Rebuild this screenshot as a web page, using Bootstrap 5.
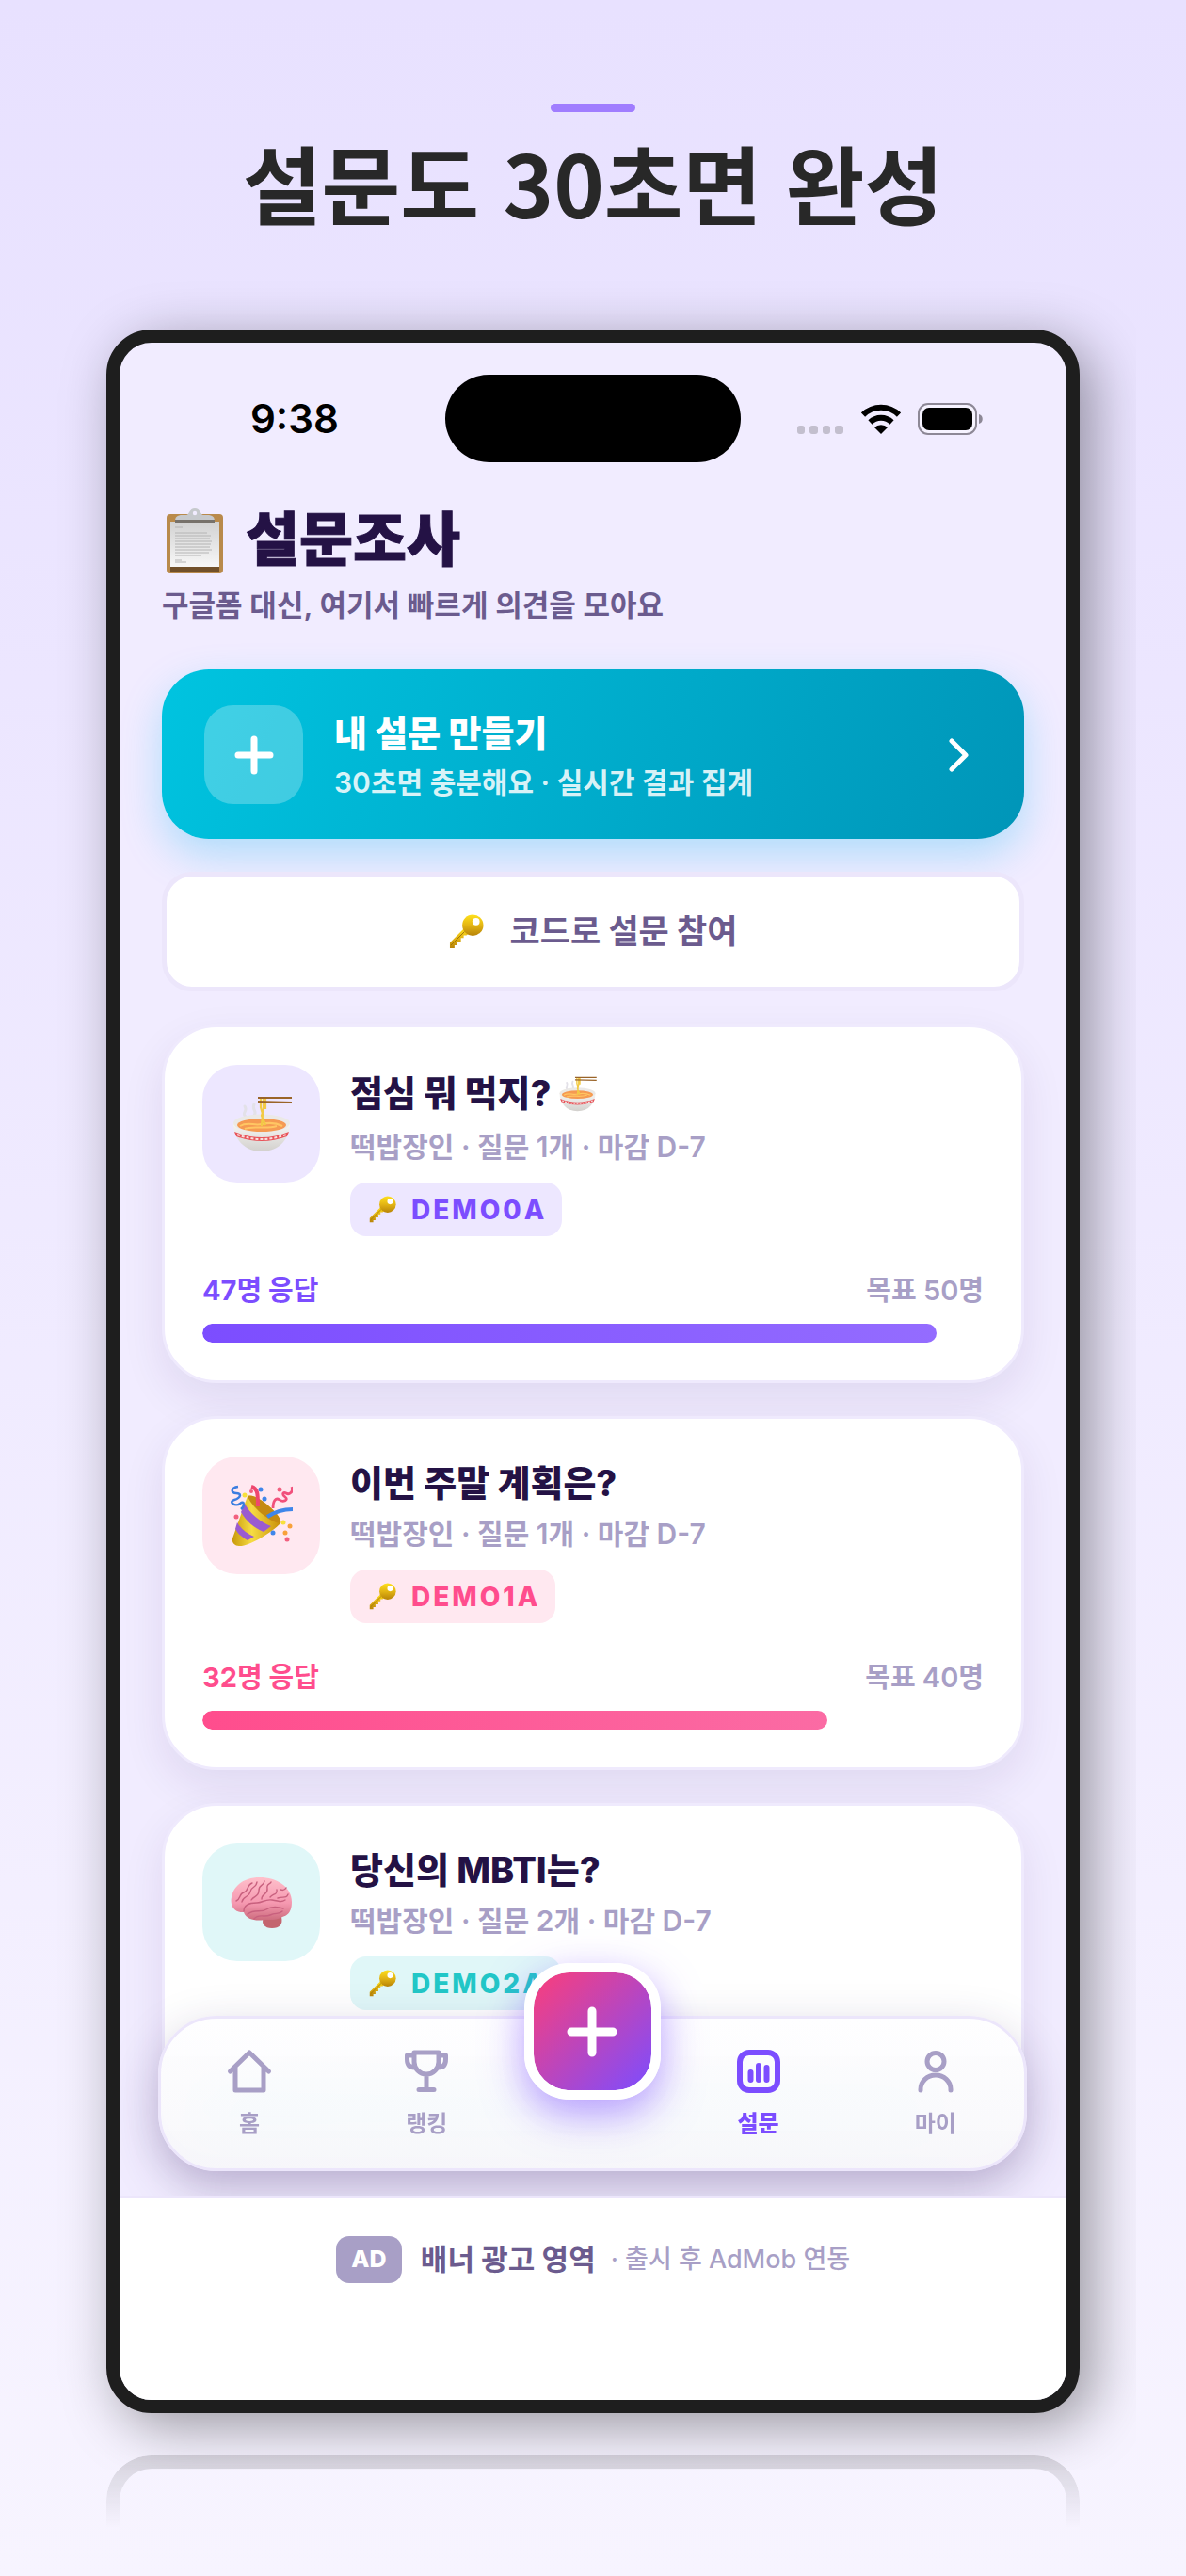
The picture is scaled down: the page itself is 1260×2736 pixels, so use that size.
<!DOCTYPE html>
<html lang="ko">
<head>
<meta charset="utf-8">
<meta name="viewport" content="width=device-width, initial-scale=1">
<title>설문조사</title>
<link href="https://cdn.jsdelivr.net/npm/bootstrap@5.3.0/dist/css/bootstrap.min.css" rel="stylesheet">
<style>
:root { --ink:#241245; --plum:#6b5b8e; --mist:#a89fc6; --line:#ece6fb; --violet:#7c4dff; --pink:#ff4d8d; --teal:#22c7c7; }
body { font-family:Inter,"Noto Sans CJK KR",sans-serif; color:var(--ink); background:linear-gradient(#e8e1ff,#f7f4ff) no-repeat; min-height:100vh; }
a { text-decoration:none; }
.promo { padding:110px 24px 0; }
.promo-accent { width:90px; height:9px; border-radius:5px; background:#a07dff; }
.promo-title { font-family:"Noto Sans CJK KR",sans-serif; font-size:91px; line-height:110px; font-weight:700; color:#282828; margin:18px 0 103px; }
.phone { max-width:1034px; border:14px solid #1e1e1e; border-radius:48px; background:#f1ecff; box-shadow:14px 14px 60px rgba(0,0,0,.38); clip-path:inset(-60px); }
.screen { border-radius:34px; overflow:hidden; }
.reflection { max-width:1034px; height:77px; margin-top:45px; border:14px solid rgba(30,30,30,.15); border-bottom:0; border-radius:48px 48px 0 0; -webkit-mask-image:linear-gradient(#000,transparent); mask-image:linear-gradient(#000,transparent); }
.promo-end { height:51px; }

.statusbar { display:grid; grid-template-columns:1fr 314px 1fr; align-items:center; padding-top:34px; }
.clock { font-size:42px; line-height:50px; font-weight:600; color:#000; padding-left:139px; }
.island { height:93px; border-radius:47px; background:#000; }
.status-icons { padding-right:88px; }
.status-icons .wifi { margin:0 18px 0 19px; }

.feed { padding:0 45px 41px; }
.page-title { font-size:62px; line-height:72px; font-weight:900; margin:47px 0 0; gap:24px; padding-left:5px; -webkit-text-stroke:1px currentColor; }
.page-sub { font-size:31px; line-height:40px; font-weight:600; color:var(--plum); margin:13px 0 48px; }

.make { padding:38px 55px 37px 45px; border-radius:50px; color:#fff; background:linear-gradient(115deg,#00c4e0,#0095b8); box-shadow:0 18px 44px rgba(0,180,240,.27); gap:33px; border:0; }
.make-tile { width:105px; height:105px; border-radius:31px; background:rgba(255,255,255,.25); }
.make-title { font-size:38px; line-height:54px; font-weight:800; margin-top:2px; }
.make-sub { font-size:30px; line-height:46px; font-weight:600; color:rgba(255,255,255,.85); margin-top:2px; }

.join { margin-top:35px; height:127px; border:5px solid var(--line); border-radius:32px; background:#fff; color:var(--plum); font-size:35px; font-weight:700; gap:28px; }

.poll { margin-top:35px; padding:40px; border:3px solid #efeafd; border-radius:58px; background:#fff; box-shadow:0 18px 46px rgba(50,20,100,.09); }
.poll-tile { width:125px; height:125px; border-radius:37px; background:var(--soft); }
.poll-head { gap:32px; }
.poll-title { font-size:38px; line-height:56px; font-weight:800; margin:0; gap:8px; }
.poll-title.has-emoji { line-height:61px; }
.poll-meta { font-size:30px; line-height:44px; font-weight:600; color:var(--mist); margin:4px 0 16px; }
.code { height:57px; padding:0 16px 0 20px; border-radius:17px; gap:16px; background:var(--soft); color:var(--tone); font-size:28px; font-weight:800; letter-spacing:3px; }
.stats { font-size:29px; line-height:40px; min-height:40px; margin:38px 0 15px; font-weight:700; color:var(--tone); }
.stats .goal { font-weight:600; color:var(--mist); }
.meter { height:20px; border-radius:10px; background:transparent; }
.meter .progress-bar { border-radius:10px; background:linear-gradient(90deg,var(--tone),var(--tone-end)); }
.violet { --tone:var(--violet); --tone-end:#946cff; --soft:#ede7ff; }
.pink { --tone:var(--pink); --tone-end:#fb6ba4; --soft:#ffe8f0; }
.teal { --tone:var(--teal); --tone-end:#5cd9d9; --soft:#e0f7f8; }

.tabbar { position:absolute; left:41px; right:42px; bottom:26px; height:165px; border:3px solid var(--line); border-radius:62px; background:linear-gradient(rgba(254,254,255,.94),rgba(247,247,250,.95)); -webkit-backdrop-filter:blur(30px); backdrop-filter:blur(30px); box-shadow:0 18px 50px rgba(50,30,90,.25); }
.tab { flex:1 1 0; color:var(--mist); font-size:24px; line-height:34px; font-weight:600; padding-top:30px; gap:13px; }
.tab.active { color:var(--violet); font-weight:800; }
.tab-gap { width:164px; }
.fab { position:absolute; top:-59px; left:50%; margin-left:-73px; width:145px; height:145px; padding:0; border:10px solid #fff; border-radius:48px; background:linear-gradient(135deg,#fb3e7a,#7c4dff) padding-box; box-shadow:0 16px 44px rgba(124,77,255,.55); }

.ad { position:relative; border-top:3px solid var(--line); background:#fff; padding:40px 24px 124px; }
.ad-tag { height:50px; width:70px; border-radius:14px; background:var(--mist); color:#fff; font-size:25px; font-weight:800; }
.ad-name { font-size:31px; line-height:40px; font-weight:700; color:var(--plum); margin:0 16px 0 20px; }
.ad-note { font-size:27px; line-height:40px; font-weight:500; color:var(--mist); }
svg { display:block; flex:none; }
</style>
</head>
<body>
<svg width="0" height="0" class="position-absolute" aria-hidden="true">
  <defs>
    <linearGradient id="gold" x1="0" y1="0" x2="0" y2="1"><stop offset="0" stop-color="#ffe11c"/><stop offset=".5" stop-color="#e3b514"/><stop offset="1" stop-color="#b88408"/></linearGradient>
    <linearGradient id="bowl" x1="0" y1="0" x2="0" y2="1"><stop offset="0" stop-color="#f7f6f4"/><stop offset="1" stop-color="#d2d0cd"/></linearGradient>
    <linearGradient id="cone" x1="0" y1="0" x2="1" y2="0"><stop offset="0" stop-color="#c99a0a"/><stop offset=".4" stop-color="#f6dc43"/><stop offset="1" stop-color="#c98f08"/></linearGradient>
    <linearGradient id="paper" x1="0" y1="0" x2="0" y2="1"><stop offset="0" stop-color="#d2d2d2"/><stop offset="1" stop-color="#f7f7f7"/></linearGradient>
    <linearGradient id="brainfill" x1="0" y1="0" x2="0" y2="1"><stop offset="0" stop-color="#ffc0cb"/><stop offset=".6" stop-color="#f598b0"/><stop offset="1" stop-color="#cc6c7d"/></linearGradient>
    <symbol id="key" viewBox="0 0 38 38">
      <path d="M17 15 1 31v6h5v-3h3v-4h4v-4h3v-3h3l5-4z" fill="url(#gold)"/>
      <path d="M2 34 17 19" stroke="#9c7208" stroke-width="1" fill="none"/>
      <circle cx="26" cy="12" r="11.500" fill="url(#gold)"/>
      <circle cx="29.500" cy="8" r="4" fill="#fff"/>
    </symbol>
    <symbol id="noodles" viewBox="0 0 64 60">
      <path d="M15 22c-5-4 3-6-1-11M24 21c4-5-3-6 0-12" fill="none" stroke="#e3e1e8" stroke-width="3" stroke-linecap="round"/>
      <path d="M2 29c0 16 11 30 30 30s30-14 30-30z" fill="url(#bowl)"/>
      <ellipse cx="32" cy="29" rx="30" ry="9.500" fill="#ebe9e6"/>
      <ellipse cx="32" cy="31" rx="26" ry="7" fill="#f59a52"/>
      <path d="M9 32c8-5 15 0 23-2s16-1 22 2M14 35c9-4 22 1 34-3" fill="none" stroke="#ffc663" stroke-width="2"/>
      <path d="M3 38q29 12 58 0l-2 5q-27 10-54 0z" fill="#e8545a"/>
      <path d="M6 41q26 10 52 0" fill="none" stroke="#f8dedd" stroke-width="2" stroke-dasharray="3 2"/>
      <path d="M31 2v10l2 7-1 13M34 2v12l-2 7 4 10M36 3v11" fill="none" stroke="#f2ca45" stroke-width="2.200"/>
      <path d="M28 2h36M28 6l36 1" stroke="#9a6428" stroke-width="2"/>
    </symbol>
    <symbol id="party" viewBox="0 0 66 66">
      <path d="M18 12C26 8 56 32 53 41 44 51 18 66 9 65c-5 0-8-4-7-8z" fill="url(#cone)"/>
      <path d="M15 20c5 10 17 20 28 24l-8 6C25 46 16 38 11 29z" fill="#9a5bd0"/><path d="M7 40c4 7 10 12 18 15l-7 4c-6-3-10-7-13-12z" fill="#9a5bd0"/>
      <path d="M18 12c3 10 23 28 35 29C56 34 27 7 18 12z" fill="#c58a12"/>
      <path d="M22 2c7 2 7 8 7 21" stroke="#ef476f" stroke-width="4" fill="none"/>
      <path d="M39 34c9-6 17-8 27-8" stroke="#3f86ea" stroke-width="4" fill="none"/>
      <path d="M8 2c-8 1-8 7-2 7s5 5-2 7 1 8 6 4 5 3 1 6" stroke="#3b7ee0" stroke-width="2.500" fill="none"/>
      <path d="M65 2c2 6-3 9-6 7s-5 1-1 4-2 6-6 3-7 1-7 9" stroke="#f1517c" stroke-width="2.800" fill="none"/>
      <g fill="#3f86ea"><circle cx="32" cy="5" r="2.500"/><circle cx="36" cy="15" r="2.500"/><circle cx="45" cy="51" r="2.500"/></g>
      <g fill="#f2607f"><circle cx="52" cy="5" r="2.500"/><circle cx="6" cy="34" r="2.500"/><circle cx="60" cy="58" r="2.500"/><circle cx="22" cy="7" r="2"/></g>
      <g fill="#f8a13a"><circle cx="58" cy="51" r="2.500"/><circle cx="63" cy="44" r="2.500"/></g><g fill="#f8e03a"><circle cx="56" cy="40" r="2.500"/><circle cx="15" cy="11" r="2.500"/></g>
    </symbol>
    <symbol id="brain" viewBox="0 0 66 56">
      <path d="M35 44c-3 6 1 11 9 11s12-4 10-12z" fill="#c4656f"/>
      <path d="M14 38C4 39-1 31 1 22 3 10 14 1 31 1c18 0 34 10 34 26 0 9-3 14-10 16-6 4-14 3-19 3-10 2-20-1-22-8z" fill="url(#brainfill)"/>
      <g fill="none" stroke="#c8607e" stroke-width="1.400" stroke-linecap="round"><path d="M14 37c0-8 8-9 14-9s8-4 16-3 9 3 14 0"/><path d="M18 40c8-6 14-1 20-5s12-3 18-1"/><path d="M6 26c5-2 3-8 8-9s3-8 9-10"/><path d="M12 27c1-6 8-5 9-11s6-3 7-10"/><path d="M22 25c3-5 8-3 8-10s5-4 6-10"/><path d="M33 24c0-6 7-5 6-11s3-4 4-7"/><path d="M42 22c3-4 8-2 7-8"/><path d="M50 23c6-2 9 1 11-4M53 14c3 1 5 0 6-2"/><path d="M25 45c5-6 11-1 17-4s9 0 13-4"/></g>
    </symbol>
  </defs>
</svg>

<header class="promo text-center">
  <div class="promo-accent mx-auto"></div>
  <h1 class="promo-title">설문도 30초면 완성</h1>
</header>

<div class="phone mx-auto">
  <div class="screen">
    <div class="position-relative">
      <div class="statusbar">
        <div class="clock">9:38</div>
        <div class="island"></div>
        <div class="status-icons d-flex justify-content-end align-items-center">
          <svg width="49" height="32" viewBox="0 0 49 32" fill="#c3bfce"><rect y="23" width="8" height="9" rx="3"/><rect x="13" y="23" width="9" height="9" rx="3"/><rect x="27" y="23" width="8" height="9" rx="3"/><rect x="40" y="23" width="9" height="9" rx="3"/></svg>
          <svg class="wifi" width="42" height="32" viewBox="0 0 42 32"><g fill="none" stroke="#000" stroke-width="6"><path d="M2 11.500a27 27 0 0 1 38 0"/><path d="M9.500 19.500a16.500 16.500 0 0 1 23 0"/></g><path d="M21 32l-7-7a10 10 0 0 1 14 0z"/></svg>
          <svg width="70" height="34" viewBox="0 0 70 34"><rect x="1" y="1" width="61" height="32" rx="10" fill="#fff" fill-opacity=".4" stroke="#8d8896" stroke-width="2"/><rect x="5" y="5" width="53" height="24" rx="7"/><path d="M65 12c5 1 5 9 0 10z" fill="#8d8896"/></svg>
        </div>
      </div>

      <main class="feed">
        <h2 class="page-title d-flex align-items-center">
          <svg width="60" height="69" viewBox="0 0 60 69" role="img" aria-label="클립보드"><rect y="6" width="60" height="63" rx="4" fill="#b98a4b"/><path d="M4 60h52v7H4z" fill="#71502a"/><path d="M4 14h52v48H4z" fill="url(#paper)"/><g stroke="#b4b4b4" stroke-width="1"><path d="M9 20h8M9 26h34M9 29h38M9 32h37M9 35h39M9 38h38M9 41h37M9 44h39M9 47h36M9 50h28M9 55h7M9 57h12"/></g><path d="M9 14c0-5 2-7 8-7h4c3 0 3-7 9-7s6 7 9 7h4c6 0 8 2 8 7z" fill="#c6c9cd"/><path d="M9 12h42v3H9z" fill="#77726b"/><circle cx="30" cy="5" r="2.200" fill="#f1ecff"/></svg>
          <span>설문조사</span>
        </h2>
        <p class="page-sub">구글폼 대신, 여기서 빠르게 의견을 모아요</p>

        <button type="button" class="make d-flex align-items-center w-100 text-start">
          <span class="make-tile d-flex align-items-center justify-content-center flex-shrink-0"><svg width="42" height="42" viewBox="0 0 42 42" stroke="#fff" stroke-width="7" stroke-linecap="round"><path d="M21 4v34M4 21h34"/></svg></span>
          <span class="flex-grow-1"><span class="make-title d-block">내 설문 만들기</span><span class="make-sub d-block">30초면 충분해요 · 실시간 결과 집계</span></span>
          <svg width="30" height="36" viewBox="0 0 30 36" fill="none" stroke="#fff" stroke-width="5" stroke-linecap="round" stroke-linejoin="round"><path d="M8 3l15 15L8 33"/></svg>
        </button>

        <button type="button" class="join d-flex align-items-center justify-content-center w-100"><svg width="37" height="37"><use href="#key"/></svg>코드로 설문 참여</button>

        <article class="poll violet">
          <div class="poll-head d-flex align-items-start">
            <div class="poll-tile d-flex align-items-center justify-content-center flex-shrink-0"><svg width="64" height="60"><use href="#noodles"/></svg></div>
            <div>
              <h3 class="poll-title has-emoji d-flex align-items-center">점심 뭐 먹지?<svg width="41" height="38"><use href="#noodles"/></svg></h3>
              <p class="poll-meta">떡밥장인 · 질문 1개 · 마감 D-7</p>
              <span class="code d-inline-flex align-items-center align-top"><svg width="29" height="29"><use href="#key"/></svg>DEMO0A</span>
            </div>
          </div>
          <div class="stats d-flex justify-content-between"><span>47명 응답</span><span class="goal">목표 50명</span></div>
          <div class="progress meter" role="progressbar" aria-valuenow="47" aria-valuemin="0" aria-valuemax="50"><div class="progress-bar" style="width:94%"></div></div>
        </article>

        <article class="poll pink">
          <div class="poll-head d-flex align-items-start">
            <div class="poll-tile d-flex align-items-center justify-content-center flex-shrink-0"><svg width="66" height="66"><use href="#party"/></svg></div>
            <div>
              <h3 class="poll-title">이번 주말 계획은?</h3>
              <p class="poll-meta">떡밥장인 · 질문 1개 · 마감 D-7</p>
              <span class="code d-inline-flex align-items-center align-top"><svg width="29" height="29"><use href="#key"/></svg>DEMO1A</span>
            </div>
          </div>
          <div class="stats d-flex justify-content-between"><span>32명 응답</span><span class="goal">목표 40명</span></div>
          <div class="progress meter" role="progressbar" aria-valuenow="32" aria-valuemin="0" aria-valuemax="40"><div class="progress-bar" style="width:80%"></div></div>
        </article>

        <article class="poll teal">
          <div class="poll-head d-flex align-items-start">
            <div class="poll-tile d-flex align-items-center justify-content-center flex-shrink-0"><svg width="66" height="56"><use href="#brain"/></svg></div>
            <div>
              <h3 class="poll-title">당신의 MBTI는?</h3>
              <p class="poll-meta">떡밥장인 · 질문 2개 · 마감 D-7</p>
              <span class="code d-inline-flex align-items-center align-top"><svg width="29" height="29"><use href="#key"/></svg>DEMO2A</span>
            </div>
          </div>
          <div class="stats"></div>
          <div class="progress meter"><div class="progress-bar" style="width:94%"></div></div>
        </article>
      </main>

      <nav class="tabbar d-flex">
        <a href="#" class="tab d-flex flex-column align-items-center"><svg width="52" height="52" viewBox="0 0 52 52" fill="none" stroke="currentColor" stroke-width="5" stroke-linecap="round" stroke-linejoin="round"><path d="M5.500 26 26 6l20.500 20M11 22v24h30V22"/></svg>홈</a>
        <a href="#" class="tab d-flex flex-column align-items-center"><svg width="52" height="52" viewBox="0 0 52 52" fill="none" stroke="currentColor" stroke-width="5" stroke-linecap="round" stroke-linejoin="round"><path d="M13 6h26v10a13 13 0 0 1-26 0zM13 9H5.500v4c0 6 3 9 8 9M39 9h7.500v4c0 6-3 9-8 9M26 29v16M18 45.500h16"/></svg>랭킹</a>
        <div class="tab-gap"></div>
        <a href="#" class="tab active d-flex flex-column align-items-center" aria-current="page"><svg width="52" height="52" viewBox="0 0 52 52" fill="none" stroke="currentColor" stroke-width="6" stroke-linecap="round"><rect x="6" y="6" width="40" height="40" rx="10"/><path d="M17.500 27v8M26 20v15M34.500 22v13"/></svg>설문</a>
        <a href="#" class="tab d-flex flex-column align-items-center"><svg width="52" height="52" viewBox="0 0 52 52" fill="none" stroke="currentColor" stroke-width="5" stroke-linecap="round"><circle cx="26" cy="15.500" r="9"/><path d="M10 46v-1a16 15 0 0 1 32 0v1"/></svg>마이</a>
        <button type="button" class="fab d-flex align-items-center justify-content-center" aria-label="만들기"><svg width="54" height="54" viewBox="0 0 54 54" stroke="#fff" stroke-width="9" stroke-linecap="round"><path d="M27 5v44M5 27h44"/></svg></button>
      </nav>
    </div>

    <footer class="ad d-flex align-items-center justify-content-center">
      <span class="ad-tag d-flex align-items-center justify-content-center">AD</span>
      <span class="ad-name">배너 광고 영역</span>
      <span class="ad-note">· 출시 후 AdMob 연동</span>
    </footer>
  </div>
</div>
<div class="reflection mx-auto"></div>
<div class="promo-end"></div>
<script src="https://cdn.jsdelivr.net/npm/bootstrap@5.3.0/dist/js/bootstrap.bundle.min.js"></script>
</body>
</html>
